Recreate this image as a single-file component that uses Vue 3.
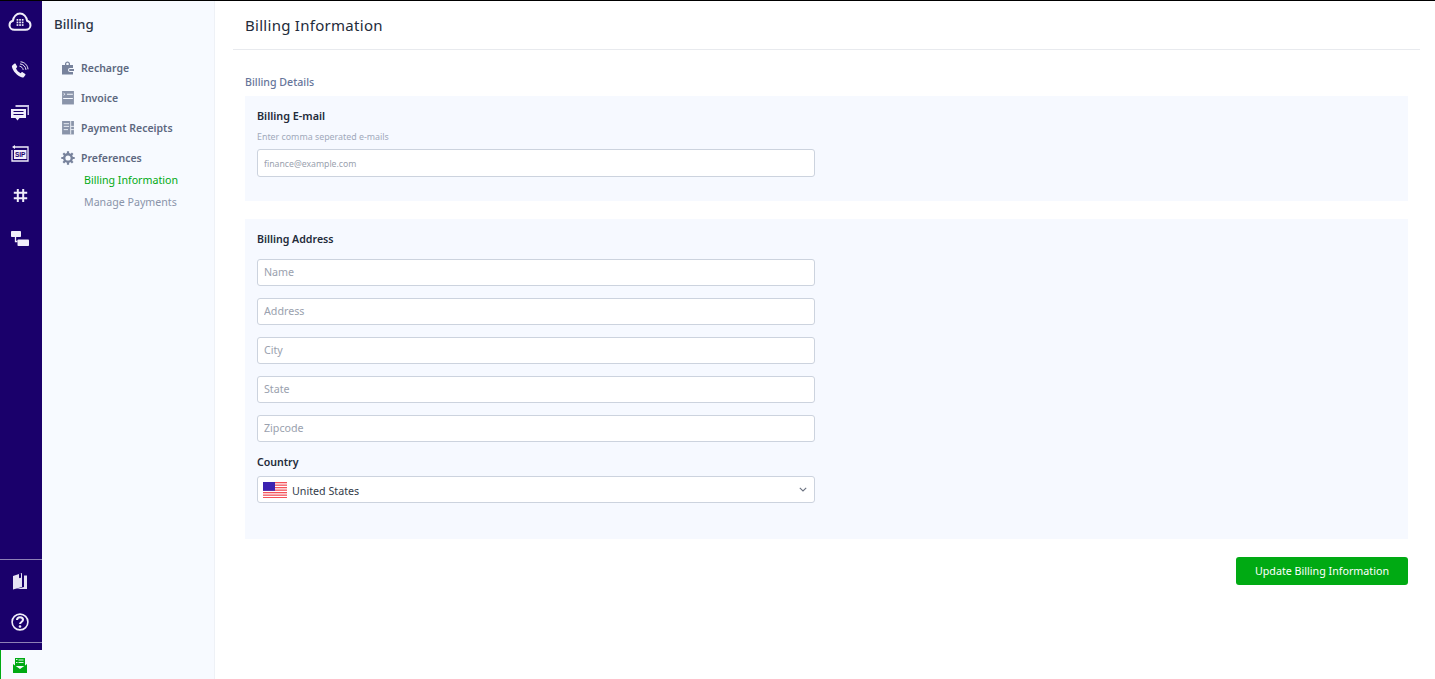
<script setup>
const nav = [
  { label: 'Recharge', icon: 'wallet' },
  { label: 'Invoice', icon: 'invoice' },
  { label: 'Payment Receipts', icon: 'receipt' },
  { label: 'Preferences', icon: 'gear' }
]
const fields = ['Name', 'Address', 'City', 'State', 'Zipcode']
</script>

<template>
  <div class="app">
    <aside class="rail">
      <div class="rail-top">
        <svg class="logo" viewBox="0 0 24 20" width="24" height="20">
          <path d="M6.5 17.8C3.6 17.8 1.5 15.8 1.5 13.2c0-2.2 1.4-3.9 3.4-4.4C5.4 4.6 8.4 1.6 12 1.6s6.6 3 7.1 7.2c2 .5 3.4 2.2 3.4 4.4 0 2.6-2.1 4.6-5 4.6z" fill="none" stroke="#f1eefa" stroke-width="2"/>
          <g fill="#f1eefa"><rect x="8.6" y="7" width="1.7" height="1.7"/><rect x="11.2" y="7" width="1.7" height="1.7"/><rect x="13.8" y="7" width="1.7" height="1.7"/><rect x="8.6" y="9.6" width="1.7" height="1.7"/><rect x="11.2" y="9.6" width="1.7" height="1.7"/><rect x="13.8" y="9.6" width="1.7" height="1.7"/><rect x="8.6" y="12.2" width="1.7" height="1.7"/><rect x="11.2" y="12.2" width="1.7" height="1.7"/><rect x="13.8" y="12.2" width="1.7" height="1.7"/></g>
        </svg>
        <div class="rail-icons">
          <svg viewBox="0 0 18 18" width="18" height="18">
            <path d="M1.5 4.2 3.6 2.6c.4-.3.8-.2 1 .2l1.5 2.7c.2.4.1.7-.2 1L5 7.300c.7 2 2.600 4 4.700 5l.9-1c.3-.3.700-.3 1-.1l2.600 1.700c.4.200.4.700.2 1l-1.500 2c-.4.500-1 .7-1.600.5C5.800 14.600 2 10.200.9 5.700c-.1-.6.100-1.100.600-1.500z" fill="#f1eefa"/>
            <path d="M8.500 5.200c1.900.2 3.500 1.800 3.700 3.700M9 2.900c3.200.2 5.800 2.800 6 6M9.500.8c4 .2 7.300 3.500 7.500 7.500" fill="none" stroke="#f1eefa" stroke-width="1"/>
          </svg>
          <svg viewBox="0 0 18 16" width="18" height="16">
            <path d="M4.500 0H18v10h-1.500V2H4.500z" fill="#c9c2e6"/>
            <path d="M0 4h15v9H8.500L6.500 15.500 4.500 13H0z" fill="#f1eefa"/>
            <path d="M2.500 6.500h10M2.500 9.500h10" stroke="#1a006b" stroke-width="1.200"/>
          </svg>
          <svg viewBox="0 0 18 17" width="18" height="17">
            <path d="M4 2h13v14H1V5" fill="none" stroke="#f1eefa" stroke-width="1.300"/>
            <path d="M4 0v4L1 2z" fill="#f1eefa"/>
            <rect x="3" y="5" width="12.500" height="9" fill="#f1eefa"/>
            <text x="9.200" y="12.300" class="sip">SIP</text>
          </svg>
          <svg viewBox="0 0 15 15" width="15" height="15">
            <path d="M4.800 1v13M10.200 1v13M.8 4.800h13.400M.8 10.200h13.400" stroke="#f1eefa" stroke-width="2" fill="none"/>
          </svg>
          <svg viewBox="0 0 18 15" width="18" height="15">
            <rect x="0" y="0" width="10" height="6" rx=".8" fill="#f1eefa"/>
            <rect x="6.500" y="8.500" width="11.500" height="6.500" rx=".8" fill="#f1eefa"/>
            <path d="M4.500 6v4.500h2" stroke="#f1eefa" stroke-width="1.300" fill="none"/>
          </svg>
        </div>
      </div>
      <div class="rail-bottom">
        <div class="rail-help">
          <svg viewBox="0 0 14 17" width="14" height="17">
            <path d="M0 3 9 0v14l-9 2.500z" fill="#e6e2f3"/>
            <path d="M11 2.500h3V16H3.500L11 14z" fill="#e6e2f3"/>
            <path d="M6 .8v4.500l1-.6 1 .3V.3z" fill="#1a006b"/>
          </svg>
          <svg viewBox="0 0 18 18" width="18" height="18">
            <circle cx="9" cy="9" r="7.900" fill="none" stroke="#f1eefa" stroke-width="1.600"/>
            <path d="M6 7c0-1.800 1.300-2.800 3-2.800s3 1 3 2.600c0 2.200-3 2.200-3 4.200" fill="none" stroke="#f1eefa" stroke-width="2.100"/>
            <circle cx="9" cy="13.500" r="1.300" fill="#f1eefa"/>
          </svg>
        </div>
      </div>
    </aside>

    <nav class="side">
      <h2 class="side-title">Billing</h2>
      <ul class="menu">
        <li v-for="item in nav" :key="item.label" class="menu-item">
          <svg v-if="item.icon === 'wallet'" viewBox="0 0 14 14" width="14" height="14">
            <path d="M4 4V2.800C4 1.300 5.200.4 6.500.4S9 1.300 9 2.800V4H7.700V2.800c0-.6-.5-1-1.200-1s-1.200.4-1.200 1V4z" fill="#77829c"/>
            <path d="M1 4h11v3H9a2 2 0 0 0 0 4h3v2.500H1z" fill="#77829c"/>
            <path d="M9 8h4v2H9a1 1 0 0 1 0-2z" fill="#77829c"/>
          </svg>
          <svg v-else-if="item.icon === 'invoice'" viewBox="0 0 12 13" width="14" height="14">
            <rect x="0.500" y="0" width="11" height="12.500" fill="#8a94aa"/>
            <path d="M5 3h5.500M1.500 7h9" stroke="#f7faff" stroke-width="1"/>
            <path d="M1.800 2 3.300 3 1.800 4" stroke="#f7faff" stroke-width=".7" fill="none"/>
          </svg>
          <svg v-else-if="item.icon === 'receipt'" viewBox="0 0 12 13" width="14" height="14">
            <rect x="0.500" y="0" width="11" height="12.500" fill="#8a94aa"/>
            <path d="M2 2.500h5M2 5h5M2 8h4M8.500 0v12.500M8.500 5h3M8.500 8h3" stroke="#f7faff" stroke-width=".8" fill="none"/>
          </svg>
          <svg v-else viewBox="0 0 14 14" width="14" height="14">
            <circle cx="7" cy="7" r="3.800" fill="none" stroke="#77829c" stroke-width="2.400"/>
            <path d="M7 .3v2.500M7 11.200v2.500M.3 7h2.500M11.200 7h2.500M2.300 2.300 4 4M10 10l1.700 1.700M2.300 11.700 4 10M10 4l1.700-1.700" stroke="#77829c" stroke-width="2.200"/>
          </svg>
          <span>{{ item.label }}</span>
        </li>
      </ul>
      <ul class="submenu">
        <li class="active">Billing Information</li>
        <li>Manage Payments</li>
      </ul>
      <div class="side-foot">
        <svg viewBox="0 0 14 15" width="14" height="15">
          <rect x="2" y="0" width="10" height="8" fill="#00aa13"/>
          <path d="M5.500 2h5M5.500 4.500h5" stroke="#f7faff" stroke-width=".9"/>
          <path d="M3 1.500h1.500M3 4.500h1.500" stroke="#f7faff" stroke-width=".9"/>
          <path d="M0 6v9h14V6l-2 1.500L7 11 2 7.500z" fill="#00aa13"/>
        </svg>
      </div>
    </nav>

    <main class="main">
      <header class="head"><h1>Billing Information</h1></header>
      <section class="content">
        <h3 class="section-label">Billing Details</h3>
        <div class="panel panel-mail">
          <label class="title">Billing E-mail</label>
          <p class="hint">Enter comma seperated e-mails</p>
          <input class="field small" placeholder="finance@example.com" />
        </div>
        <div class="panel panel-address">
          <label class="title address-title">Billing Address</label>
          <div class="stack">
            <input v-for="f in fields" :key="f" class="field" :placeholder="f" />
          </div>
          <label class="title country">Country</label>
          <div class="select">
            <svg class="flag" viewBox="0 0 24 16" width="24" height="16">
              <rect width="24" height="16" fill="#fff"/>
              <g fill="#f4525a"><rect y="0" width="24" height="1.300"/><rect y="2.500" width="24" height="1.300"/><rect y="5" width="24" height="1.300"/><rect y="7.500" width="24" height="1.300"/><rect y="10" width="24" height="1.300"/><rect y="12.500" width="24" height="1.300"/><rect y="15" width="24" height="1"/></g>
              <rect width="12" height="8.800" fill="#3c22b0"/>
            </svg>
            <span class="country-name">United States</span>
            <svg class="chev" viewBox="0 0 8 5" width="8" height="5"><path d="M.8.8 4 4 7.200.8" fill="none" stroke="#6b7280" stroke-width="1.100"/></svg>
          </div>
        </div>
        <div class="actions"><button class="btn">Update Billing Information</button></div>
      </section>
    </main>
  </div>
</template>

<style>
html, body { margin: 0; background: #fff; }
</style>

<style scoped>
.app {
  display: flex;
  width: 1435px;
  height: 679px;
  box-sizing: border-box;
  border-top: 1px solid #000;
  overflow: hidden;
  font-family: "Noto Sans", "Open Sans", sans-serif;
  color: #1f2937;
  position: relative;
}
.rail {
  width: 42px;
  flex: none;
  height: 649px;
  background: #1a006b;
  display: flex;
  flex-direction: column;
  justify-content: space-between;
}
.rail-top { display: flex; flex-direction: column; align-items: center; padding: 11px 2px 0 0; }
.rail-icons { display: flex; flex-direction: column; align-items: center; margin-top: 29px; }
.rail-icons svg { display: block; }
.rail-icons svg:nth-child(1) { margin-top: 0; }
.rail-icons svg:nth-child(2) { margin-top: 26px; }
.rail-icons svg:nth-child(3) { margin-top: 24px; }
.rail-icons svg:nth-child(4) { margin-top: 26px; }
.rail-icons svg:nth-child(5) { margin-top: 28px; }
.sip { font: 700 6.500px "Liberation Sans", sans-serif; fill: #1a006b; text-anchor: middle; }
.rail-bottom { border-top: 1px solid #8d80b5; height: 91px; box-sizing: border-box; position: relative; }
.rail-help {
  height: 90px;
  box-sizing: border-box;
  display: flex;
  flex-direction: column;
  align-items: center;
  padding-top: 13px;
  gap: 23px;
}
.rail-help svg { margin-right: 2px; }
.rail-help::after {
  content: "";
  width: 42px;
  height: 1px;
  background: #8d80b5;
  margin-top: -12px;
}
.side {
  width: 173px;
  flex: none;
  background: #f7faff;
  border-right: 1px solid #eef1f6;
  box-sizing: border-box;
  padding: 14px 0 0 12px;
  position: relative;
}
.side-title { margin: 0; font-size: 13.300px; line-height: 18px; font-weight: 500; color: #2b3445; }
.menu { list-style: none; margin: 20px 0 0; padding: 0 0 0 7px; }
.menu-item {
  display: flex;
  align-items: center;
  gap: 6px;
  height: 30px;
  font-size: 10.500px;
  font-weight: 600;
  color: #5d6880;
}
.menu-item svg { flex: none; }
.submenu { list-style: none; margin: -4px 0 0; padding: 0 0 0 30px; font-size: 10.650px; color: #8a94aa; }
.submenu li { height: 22px; line-height: 22px; white-space: nowrap; }
.submenu .active { color: #00aa13; }
.side-foot {
  position: absolute;
  left: -42px;
  top: 649px;
  width: 42px;
  height: 29px;
  box-sizing: border-box;
  border-left: 1px solid #00aa13;
  background: #f7faff;
  display: flex;
  justify-content: center;
  padding: 8px 3px 0 0;
}
.main { flex: 1; min-width: 0; padding: 0 15px 0 18px; }
.head { height: 48px; border-bottom: 1px solid #e8eaee; box-sizing: content-box; padding-left: 12px; }
.head h1 { margin: 0; font-size: 15px; line-height: 48px; font-weight: 400; color: #232b3a; letter-spacing: .28px; }
.content { padding: 0 12px; }
.section-label { margin: 24px 0 0; height: 22px; font-size: 10.600px; line-height: 17px; font-weight: 500; color: #66759a; }
.panel { background: #f6f9ff; padding: 0 12px; overflow: hidden; box-sizing: border-box; }
.panel-mail { height: 105px; padding-top: 12px; }
.panel-address { height: 320px; margin-top: 18px; padding-top: 12px; }
.title { display: block; font-size: 10.800px; line-height: 16px; font-weight: 600; color: #232b3a; }
.address-title, .country { font-size: 10.600px; }
.hint { margin: 6px 0 0; font-size: 8.850px; line-height: 14px; color: #a1a9bb; }
.field, .select {
  display: block;
  width: 558px;
  height: 27px;
  box-sizing: border-box;
  border: 1px solid #ccd3de;
  border-radius: 3px;
  background: #fff;
  padding: 0 6px 2px;
  font-family: inherit;
  font-size: 10.700px;
  outline: none;
}
.field::placeholder { color: #9aa1ae; opacity: 1; }
.field.small { margin-top: 5px; height: 28px; padding: 1px 6px 0; font-size: 8.700px; }
.address-title { margin-bottom: 12px; }
.stack { display: flex; flex-direction: column; gap: 12px; }
.country { margin-top: 12px; margin-bottom: 6px; }
.select { display: flex; align-items: center; gap: 5px; padding: 0 7px 0 5px; font-size: 10.700px; color: #333b4a; }
.country-name { flex: 1; padding-top: 2px; }
.flag { flex: none; }
.chev { flex: none; }
.actions { display: flex; justify-content: flex-end; margin-top: 18px; }
.btn {
  width: 172px;
  height: 28px;
  border: 0;
  border-radius: 3px;
  background: #00aa13;
  color: #fff;
  font-family: inherit;
  font-size: 10.700px;
  padding: 0;
}
</style>
